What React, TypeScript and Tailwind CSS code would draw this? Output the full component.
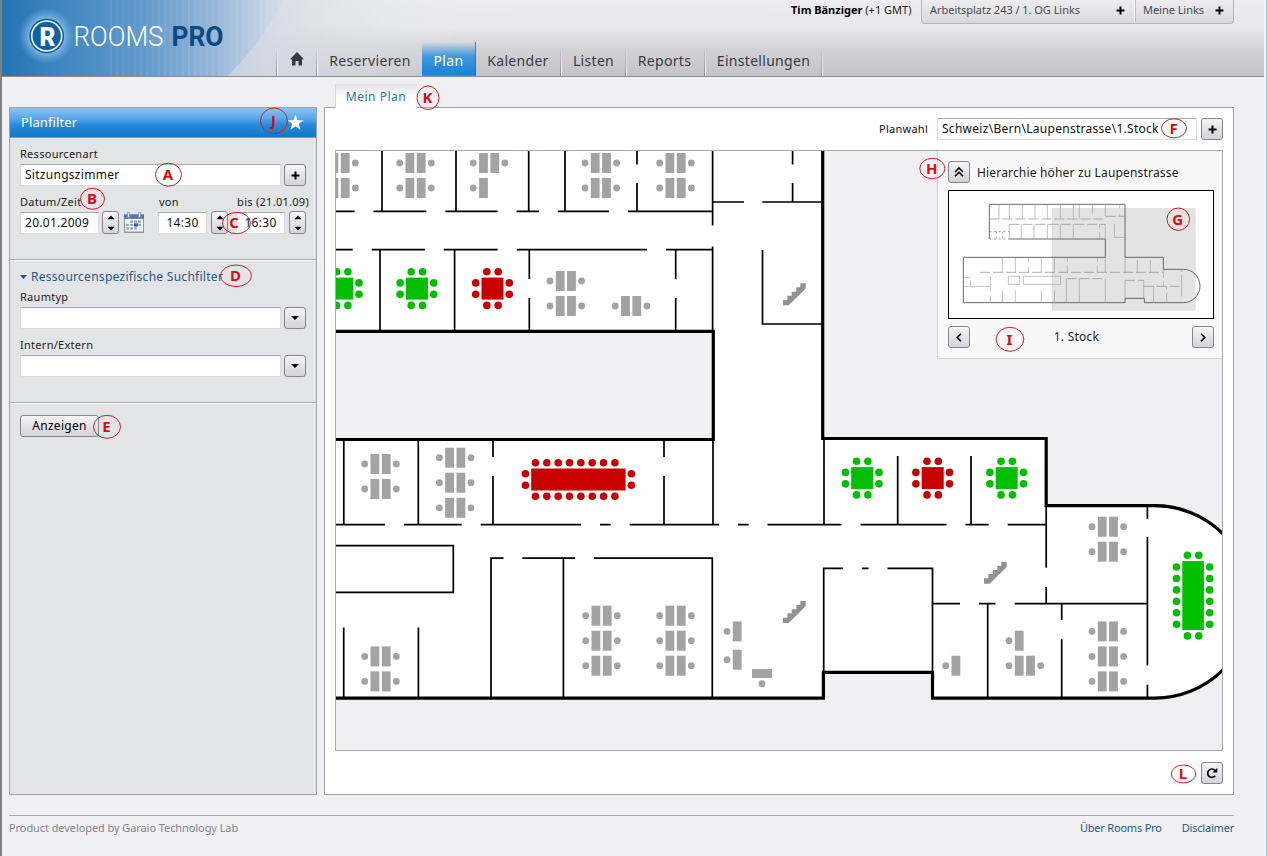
import React from 'react';

const BTN =
  'flex shrink-0 items-center justify-center rounded-[3px] border border-[#85858c] bg-gradient-to-b from-[#f6f6f8] to-[#d3d3d8] text-black';
const INPUT =
  'flex h-[22px] shrink-0 items-center border border-[#dcdce0] border-t-[#a9a9b0] bg-white px-1 text-[12px] tracking-[0.28px] text-[#111] whitespace-nowrap';

function Plus() {
  return (
    <svg width="9" height="9" viewBox="0 0 9 9">
      <path d="M4.5 .5v8M.5 4.5h8" stroke="#000" strokeWidth="2" />
    </svg>
  );
}

function Down() {
  return (
    <svg width="8" height="4" viewBox="0 0 8 4">
      <path d="M0 0h8L4 4z" fill="#000" />
    </svg>
  );
}

function Spinner() {
  return (
    <div className={`${BTN} h-[23px] w-[17px]`}>
      <svg width="8" height="16" viewBox="0 0 8 16">
        <path d="M.5 4.2h7L4 .4zM.5 11.8h7L4 15.600z" fill="#000" />
      </svg>
    </div>
  );
}

function Calendar() {
  return (
    <svg width="22" height="22" viewBox="0 0 22 22">
      <path d="M1 2.5h20v18.500H1z" fill="#8f959e" />
      <path d="M2 7h18v12.5H2z" fill="#f3f6fa" />
      <path d="M1 2.500h20v4H1z" fill="#4a78b5" />
      <path d="M4.500 .5h2v5h-2zM15.500 .5h2v5h-2z" fill="#dfe3e8" stroke="#77808c" strokeWidth=".6" />
      <path
        d="M7 8.500h3v2.300H7zM11 8.500h3v2.300H11zM15 8.500h3v2.300H15zM3 11.800h3v2.300H3zM7 11.800h3v2.300H7zM15 11.800h3v2.300H15zM3 15.300h3v2.300H3zM7 15.300h3v2.300H7zM11 15.300h3v2.300H11z"
        fill="#9aa6b6"
      />
      <path d="M11 11.300h3.800v3.300H11z" fill="#2f5fa8" />
    </svg>
  );
}

function Brand() {
  return (
    <svg width="460" height="76" viewBox="2 0 460 76" className="block shrink-0">
      <defs>
        <linearGradient id="blue" x1="0" x2="1">
          <stop offset="0" stopColor="#2474b2" />
          <stop offset=".2" stopColor="#3f86c0" />
          <stop offset=".5" stopColor="#6199ca" />
          <stop offset=".75" stopColor="#96b6d8" />
          <stop offset="1" stopColor="#d6deea" />
        </linearGradient>
        <linearGradient id="mist" x1="0" x2="1">
          <stop offset="0" stopColor="#b9cadf" />
          <stop offset=".25" stopColor="#d3dae5" stopOpacity=".9" />
          <stop offset="1" stopColor="#e9eaed" stopOpacity="0" />
        </linearGradient>
        <radialGradient id="glow">
          <stop offset=".5" stopColor="#a8dbff" stopOpacity=".75" />
          <stop offset="1" stopColor="#8ec8f5" stopOpacity="0" />
        </radialGradient>
        <pattern id="rays" width="6" height="76" patternUnits="userSpaceOnUse">
          <path d="M3 0v76" stroke="#fff" strokeWidth="2" opacity=".06" />
        </pattern>
      </defs>
      <path d="M200 0h262v76H200z" fill="url(#mist)" />
      <path d="M2 0h281Q264 40 228 76H2z" fill="url(#blue)" />
      <path d="M110 0h173Q264 40 228 76H110z" fill="url(#rays)" />
      <circle cx="46.500" cy="36" r="28" fill="url(#glow)" />
      <circle cx="46.700" cy="36" r="17.300" fill="#0b5695" />
      <circle cx="46.700" cy="36" r="15" fill="#0f62a8" stroke="#fff" strokeWidth="1.600" />
      <text x="39.500" y="45.500" fontFamily="Roboto, sans-serif" fontWeight="900" fontSize="26" fill="#fff" textLength="16" lengthAdjust="spacingAndGlyphs">R</text>
      <text x="73.500" y="45.500" fontFamily="Roboto, sans-serif" fontWeight="300" fontSize="27" fill="#fff" textLength="90" lengthAdjust="spacingAndGlyphs">ROOMS</text>
      <text x="171.500" y="45.500" fontFamily="Roboto, sans-serif" fontWeight="700" fontSize="27" fill="#0a4a86" textLength="52" lengthAdjust="spacingAndGlyphs">PRO</text>
    </svg>
  );
}

function Sep() {
  return (
    <div className="flex h-[27px] w-[2px] shrink-0">
      <div className="w-px bg-gradient-to-b from-transparent to-[#8e8e94]" />
      <div className="w-px bg-gradient-to-b from-transparent to-white" />
    </div>
  );
}

function NavItem({ label, width }: { label: string; width: string }) {
  return (
    <>
      <div className={`${width} shrink-0 pb-[4px] text-center text-[14px] leading-[22px] tracking-[0.3px] whitespace-nowrap text-[#3b3b3f]`}>
        {label}
      </div>
      <Sep />
    </>
  );
}

function Header() {
  return (
    <header className="relative flex h-[77px] w-[1262px] border-b border-[#8b8b91] bg-[linear-gradient(#ededef_0,#e9e9eb_35%,#d2d2d6_65%,#c3c3c8_100%)]">
      <Brand />
      <nav className="absolute bottom-0 left-[274px] flex items-end">
        <Sep />
        <div className="flex h-[27px] w-[38px] justify-center pt-[3px]">
          <svg width="14" height="14" viewBox="0 0 14 14">
            <path d="M7 0 14 7.200H12V13.500H8.500V9H5.500V13.500H2V7.200H0z" fill="#3a3a3e" />
          </svg>
        </div>
        <Sep />
        <div className="w-[104px] pb-[4px] text-center text-[14px] leading-[22px] tracking-[0.35px] text-[#3b3b3f]">Reservieren</div>
        <div className="flex h-[34px] w-[54px] items-end justify-center border-r border-b border-[#1a6bb0]/70 bg-[linear-gradient(transparent,#3f97dc_45%,#1784dc)] pb-[3px] text-[14px] leading-[22px] tracking-[0.3px] text-white">
          Plan
        </div>
        <NavItem label="Kalender" width="w-[84px]" />
        <NavItem label="Listen" width="w-[63px]" />
        <NavItem label="Reports" width="w-[77px] pr-[2px]" />
        <NavItem label="Einstellungen" width="w-[115px]" />
      </nav>
      <div className="ml-auto flex h-[24px] pr-[30px] text-[11px]">
        <div className="w-[130px] pt-px leading-[17px] whitespace-nowrap text-[#222]">
          <b className="text-black">Tim Bänziger</b> (+1 GMT)
        </div>
        <div className="flex h-[24px] w-[313px] rounded-b-[4px] border border-t-0 border-[#b4b4ba] bg-gradient-to-b from-[#ededef] to-[#d9d9dd] leading-[17px] tracking-[-0.04px] text-[#4a4a4e]">
          <div className="flex w-[213px] items-start justify-between border-r border-white pt-px pr-[9px] pl-2 whitespace-nowrap">
            <span>Arbeitsplatz 243 / 1. OG Links</span>
            <span className="pt-[5px]"><Plus /></span>
          </div>
          <div className="flex flex-1 items-start justify-between border-l border-[#bbbbc0] pt-px pr-[9px] pl-[7px] whitespace-nowrap">
            <span>Meine Links</span>
            <span className="pt-[5px]"><Plus /></span>
          </div>
        </div>
      </div>
    </header>
  );
}

function Sidebar() {
  return (
    <aside className="h-[688px] w-[308px] shrink-0 border border-[#a2a2a9] bg-[#e3e4e6] text-[11px] tracking-[0.28px] text-[#1d1d20]">
      <div className="flex h-[30px] items-center justify-between border-b border-[#8c9cb0] bg-[linear-gradient(#8cc4f4_0,#59a8ea_35%,#2389dd_60%,#1577c4_100%)] pr-3 pl-[11px] text-[13px] tracking-[0.1px] text-white">
        <span>Planfilter</span>
        <svg width="17" height="17" viewBox="0 0 18 17">
          <path d="M9 0l2.200 6h6.300l-5 3.900 1.900 6.300L9 12.400l-5.400 3.800 1.900-6.300-5-3.900h6.300z" fill="#fff" />
        </svg>
      </div>
      <div className="h-[122px] border-b border-[#a9a9b0] px-[10px] pt-[8px]">
        <div className="h-[18px] leading-[16px]">Ressourcenart</div>
        <div className="flex justify-between">
          <div className={`${INPUT} w-[261px]`}>Sitzungszimmer</div>
          <div className={`${BTN} h-[22px] w-[22px]`}><Plus /></div>
        </div>
        <div className="flex h-[25px] pt-[8px] leading-[16px] whitespace-nowrap">
          <span className="w-[139px]">Datum/Zeit</span>
          <span>von</span>
          <span className="mr-[-3px] ml-auto">bis (21.01.09)</span>
        </div>
        <div className="flex items-center">
          <div className={`${INPUT} w-[79px]`}>20.01.2009</div>
          <div className="ml-[3px]"><Spinner /></div>
          <div className="ml-[4px]"><Calendar /></div>
          <div className={`${INPUT} ml-[13px] w-[49px] justify-center`}>14:30</div>
          <div className="ml-[4px]"><Spinner /></div>
          <div className={`${INPUT} ml-[8px] w-[49px] justify-center`}>16:30</div>
          <div className="ml-[4px]"><Spinner /></div>
        </div>
      </div>
      <div className="h-[143px] border-t border-b border-t-white border-b-[#a9a9b0] px-[10px] pt-[6px]">
        <div className="flex h-[20px] items-center gap-[4px] text-[12px] whitespace-nowrap text-[#1d5a90]">
          <svg width="7" height="4" viewBox="0 0 7 4"><path d="M0 0h7L3.500 4z" fill="#0f5a98" /></svg>
          Ressourcenspezifische Suchfilter
        </div>
        <div className="h-[20px] pt-[2px] leading-[16px]">Raumtyp</div>
        <div className="flex justify-between">
          <div className={`${INPUT} w-[261px]`} />
          <div className={`${BTN} h-[22px] w-[22px]`}><Down /></div>
        </div>
        <div className="h-[26px] pt-[8px] leading-[16px]">Intern/Extern</div>
        <div className="flex justify-between">
          <div className={`${INPUT} w-[261px]`} />
          <div className={`${BTN} h-[22px] w-[22px]`}><Down /></div>
        </div>
      </div>
      <div className="border-t border-white px-[10px] pt-[11px]">
        <div className={`${BTN} h-[22px] w-[79px] text-[12px]`}>Anzeigen</div>
      </div>
    </aside>
  );
}

type Pt = [number, number];

function Desk({ x, y, half = false }: { x: number; y: number; half?: boolean }) {
  return (
    <g fill="#a3a3a3">
      <circle cx={x - 15.8} cy={y} r="3.400" />
      <rect x={x - 10} y={y - 10} width="8.800" height="20" />
      {!half && <rect x={x + 1.3} y={y - 10} width="8.800" height="20" />}
      {!half && <circle cx={x + 15.8} cy={y} r="3.400" />}
    </g>
  );
}

type TableProps = { x: number; y: number; w?: number; h?: number; nx?: number; ny?: number; shift?: number; color: string };

function Table({ x, y, w = 22, h = 22, nx = 2, ny = 2, shift = 0, color }: TableProps) {
  const chairs: Pt[] = [];
  for (let i = 0; i < nx; i++) {
    const dx = (i - (nx - 1) / 2) * 11.35 + shift;
    chairs.push([x + dx, y - h / 2 - 5.8], [x + dx, y + h / 2 + 5.8]);
  }
  for (let i = 0; i < ny; i++) {
    const dy = (i - (ny - 1) / 2) * 11.45;
    chairs.push([x - w / 2 - 5.8, y + dy], [x + w / 2 + 5.8, y + dy]);
  }
  return (
    <g fill={color}>
      <rect x={x - w / 2} y={y - h / 2} width={w} height={h} />
      {chairs.map(([cx, cy], i) => (
        <circle key={i} cx={cx} cy={cy} r="3.800" />
      ))}
    </g>
  );
}

const GREEN = '#00bf00';
const RED = '#c80000';

const DESKS: Pt[] = [
  [339.5, 163], [339.5, 188], [415.5, 163], [415.5, 188], [489.1, 163], [600.8, 163], [600.8, 188],
  [675.5, 163], [675.5, 188], [565.8, 281], [565.8, 306], [631.1, 306], [380.5, 464], [380.5, 489],
  [455.2, 457.7], [455.2, 482.7], [455.2, 507.8], [380.5, 656.4], [380.5, 681.4],
  [601.5, 615.7], [601.5, 640.7], [601.5, 665.7], [675.5, 615.7], [675.5, 640.7], [675.5, 665.7],
  [1024.8, 665.7], [1107.8, 526.7], [1107.8, 551.7], [1107.8, 631.4], [1107.8, 656.4], [1107.8, 681.4],
];
const HALF_DESKS: Pt[] = [[489.1, 188], [742.8, 631.4], [742.8, 659.7], [961.5, 665.7], [1024.8, 640.7]];
const STAIRS: Pt[] = [[783, 305.3], [783, 623], [984, 583.7]];

const WALLS = [
  'M382 151V211M456 151V211M528.700 151V211M565 151V211',
  'M336 211.300H354.700M373.500 211.300H426.300M445.300 211.300H497.700M516.500 211.300H539M558 211.300H609M628 211.300H712.600',
  'M336 249.600H352.700M371.700 249.600H425M443.700 249.600H497.700M516.700 249.600H647M666 249.600H712.600',
  'M380 250V330M454.600 250V330M529.300 250V279M529.300 298V330',
  'M637 151V164.500M637 183V211M712.600 151V225.600M712.600 246.500V330M792.600 151V164.500M792.600 183V202',
  'M712.600 202H744M762.300 202H822M675.700 250V279M675.700 298V330M762.500 250V324H822',
  'M343.800 440V524M418.300 440V524M493 440V457M493 476V524M664 440V457M664 476V524M713 440V524',
  'M336 524.600H385M404 524.600H461.700M480.700 524.600H581M600 524.600H610.700M629.700 524.600H719M738 524.600H748.700M767.500 524.600H841.500M860.500 524.600H946.500M965.500 524.600H988.700M1007.700 524.600H1046',
  'M336 545.700H453.300V592.300H336',
  'M503.500 558.200H491V698M522.300 558.200H575.200M594 558.200H712.300V698M563.400 558V698',
  'M343.700 627.500V698M418.400 627.500V698M824 440V524M897.700 456V524M971 456V524',
  'M843 568.400H823.700V672M862 568.400H868.500M887.500 568.400H932.500V672',
  'M932.500 603.700H960M979 603.700H995.500M1014.700 603.700H1147.300M987.700 604V698',
  'M1061.700 604V620M1061.700 639V698M1046.200 506V567.700M1046.200 587V604M1147.400 506V518.700M1147.400 537V665.600M1147.400 684.700V698',
].join('');

function FloorPlan() {
  return (
    <svg width="886" height="599" viewBox="336 151 886 599" className="block bg-[#f0f0f2]">
      <path
        d="M330 145H822.700V438.500H1046.200V505.700H1155A96.200 96.200 0 0 1 1155 698.100H932.500V672.300H823.400V698.100H330V439.500H713.300V331.300H330Z"
        fill="#fff"
        stroke="#000"
        strokeWidth="3.200"
      />
      <path d={WALLS} fill="none" stroke="#000" strokeWidth="1.700" />
      {DESKS.map(([x, y], i) => <Desk key={i} x={x} y={y} />)}
      {HALF_DESKS.map(([x, y], i) => <Desk key={i} x={x} y={y} half />)}
      <rect x="752" y="669" width="20" height="9" fill="#a3a3a3" />
      <circle cx="762" cy="683.700" r="3.400" fill="#a3a3a3" />
      {STAIRS.map(([x, y], i) => (
        <path key={i} transform={`translate(${x} ${y}) scale(.3333)`} d="M0 0V-16H13V-29H26V-41H40V-54H52V-66H68V-50L17 0Z" fill="#929292" />
      ))}
      <Table x={342.2} y={288.6} color={GREEN} />
      <Table x={416.9} y={288.6} color={GREEN} />
      <Table x={492.5} y={288.6} color={RED} />
      <Table x={862.2} y={478.1} color={GREEN} />
      <Table x={932.7} y={478.1} color={RED} />
      <Table x={1006.7} y={478.1} color={GREEN} />
      <Table x={578.4} y={479.5} w={94.4} nx={8} shift={-3.2} color={RED} />
      <Table x={1193.1} y={595.6} w={21.6} h={69} ny={6} color={GREEN} />
    </svg>
  );
}

function MiniMap() {
  return (
    <svg width="266" height="129" viewBox="69 135 798 387" className="block">
      <rect x="70.500" y="136.500" width="795" height="384" fill="#fff" stroke="#000" strokeWidth="3" />
      <rect x="381" y="189" width="431" height="308" fill="#e3e3e3" />
      <path
        d="M193 282V178H600V337H715V373H775A50 50 0 0 1 775 473H658V460H600V473H115V337H541V282H253"
        fill="none"
        stroke="#555"
        strokeWidth="2.600"
      />
      <path
        d="M222 180V222M253 180V220M292 180V220M330 180V220M367 180V220M406 180V220M445 180V220M463 180V220M502 180V206M541 180V214M584 180V190M584 206V214M568 237V277H600M289 238V282M327 238V282M367 238V282M406 238V282M445 238V282M524 238V250M524 262V282M541 238V282M253 238V282M232 339V382M271 339V382M310 339V350M310 366V382M349 339V382M388 339V382M427 339V350M427 362V382M517 339V350M517 362V382M541 339V382M600 339V382M637 345V382M676 345V382M715 373V398M715 410V424M770 373V380M770 390V454M196 394V440M196 452V473M232 436V473M271 436V473M349 436V473M388 436V473M115 424H196M115 398H137M137 406V424M250 394H284V418H250ZM295 394H407V418H295ZM424 473V401M463 401V473M541 401V473M600 460V406M656 406V460M686 424V473M725 424V434M725 444V473"
        fill="none"
        stroke="#999"
        strokeWidth="1.800"
      />
      <path d="M193 222H541M253 238H541M541 214H600M165 382H715M424 401H541M600 406H656M656 424H770" fill="none" stroke="#8a8a8a" strokeWidth="2" strokeDasharray="30 9" />
      <path d="M193 260H253M193 282H253M214 260V282M232 260V282" fill="none" stroke="#666" strokeWidth="2" strokeDasharray="6 8" />
    </svg>
  );
}

function Navigator() {
  return (
    <div className="absolute top-0 right-0 h-[208px] w-[285px] border-b border-l border-[#d3d3d7] bg-[#f8f8f9] pt-[10px] pr-[8px] pl-[10px] text-[12px] tracking-[0.17px] text-[#1a1a1c]">
      <div className="flex h-[29px] items-start gap-[7px]">
        <div className={`${BTN} h-[22px] w-[22px]`}>
          <svg width="10" height="10" viewBox="0 0 10 10"><path d="M1 5 5 1l4 4M1 9.300l4-4 4 4" fill="none" stroke="#000" strokeWidth="1.600" /></svg>
        </div>
        <span className="leading-[23px] whitespace-nowrap">Hierarchie höher zu Laupenstrasse</span>
      </div>
      <MiniMap />
      <div className="mt-[7px] flex items-center justify-between">
        <div className={`${BTN} h-[22px] w-[22px]`}>
          <svg width="6" height="9" viewBox="0 0 6 9"><path d="M5 .7 1.200 4.500 5 8.300" fill="none" stroke="#000" strokeWidth="1.600" /></svg>
        </div>
        <span className="pr-[9px] tracking-[0.25px]">1. Stock</span>
        <div className={`${BTN} h-[22px] w-[22px]`}>
          <svg width="6" height="9" viewBox="0 0 6 9"><path d="M1 .7 4.800 4.500 1 8.300" fill="none" stroke="#000" strokeWidth="1.600" /></svg>
        </div>
      </div>
    </div>
  );
}

function PlanArea() {
  return (
    <main className="w-[910px] shrink-0">
      <div className="relative z-10 -mb-px ml-[11px] flex h-[24px] w-[82px] items-center justify-center border-l border-[#d9d9dd] bg-gradient-to-b from-[#e2e2e5] to-white to-60% pt-[2px] pr-[1px] text-[12px] tracking-[0.5px] text-[#2277bd]">
        Mein Plan
      </div>
      <div className="h-[688px] border border-[#a2a2a9] bg-white pr-[10px] pl-[10px]">
        <div className="flex h-[42px] items-center justify-end text-[12px] text-[#111]">
          <span className="mr-[9px] text-[11px] tracking-[0.25px]">Planwahl</span>
          <div className={`${INPUT} mr-[4px] w-[260px]`}>Schweiz\Bern\Laupenstrasse\1.Stock</div>
          <div className={`${BTN} h-[22px] w-[22px]`}><Plus /></div>
        </div>
        <div className="relative h-[601px] w-[888px] border border-[#a8a8ae]">
          <FloorPlan />
          <Navigator />
        </div>
        <div className="flex h-[43px] items-center justify-end">
          <div className={`${BTN} h-[22px] w-[22px]`}>
            <svg width="12" height="12" viewBox="0 0 12 12">
              <path d="M9.200 8.800A4.200 4.200 0 1 1 9 3.400" fill="none" stroke="#000" strokeWidth="1.700" />
              <path d="M11.300 .8V5.600H6.500z" fill="#000" />
            </svg>
          </div>
        </div>
      </div>
    </main>
  );
}

const MARKS: [string, number, number, number, number][] = [
  ['A', 168.5, 174.7, 13, 11.5], ['B', 92.5, 198.8, 12, 10.5], ['C', 236.5, 223, 14, 10.7],
  ['D', 236, 275.8, 15.5, 10.8], ['E', 107, 426.8, 13.5, 11.5], ['F', 1174, 128.3, 12.5, 9.5],
  ['G', 1178.3, 219.2, 11.3, 11.2], ['H', 932.3, 168.5, 12.5, 10.2], ['I', 1010, 339.3, 13.8, 12],
  ['J', 274, 120.8, 13.5, 12.8], ['K', 428, 97.8, 11, 11.8], ['L', 1183.5, 774, 12.2, 9],
];

function Marks() {
  return (
    <svg width="1267" height="856" viewBox="0 0 1267 856" className="pointer-events-none absolute top-0 left-0 z-20">
      {MARKS.map(([letter, x, y, rx, ry]) => (
        <g key={letter}>
          <ellipse cx={x} cy={y} rx={rx} ry={ry} fill="none" stroke="#d81c24" strokeWidth="1" />
          <text x={letter === 'C' ? x - 2.5 : x - 0.5} y={y + 5.4} textAnchor="middle" fontFamily="'Noto Sans', sans-serif" fontWeight="700" fontSize="15" fill="#dd0a12">
            {letter}
          </text>
        </g>
      ))}
    </svg>
  );
}

export default function App() {
  return (
    <div className="relative flex h-[856px] w-[1267px] overflow-hidden bg-[#f0f0f2] font-['Noto_Sans','Open_Sans',sans-serif]">
      <div className="w-[2px] shrink-0 bg-[#7f7f84]" />
      <div className="flex w-[1262px] shrink-0 flex-col">
        <Header />
        <div className="flex items-end gap-[7px] pt-[7px] pl-[7px]">
          <Sidebar />
          <PlanArea />
        </div>
        <footer className="mt-[20px] ml-[7px] flex w-[1225px] justify-between border-t border-[#a9a9b0] pt-[3px] text-[11px] leading-[17px] tracking-[-0.08px]">
          <span className="text-[#85858a]">Product developed by Garaio Technology Lab</span>
          <span className="flex gap-[20px] tracking-[-0.2px] text-[#1d5a90]">
            <span>Über Rooms Pro</span>
            <span>Disclaimer</span>
          </span>
        </footer>
      </div>
      <div className="w-[2px] shrink-0 bg-[#f8f9fb]" />
      <div className="w-px shrink-0 bg-[#a9c0dc]" />
      <Marks />
    </div>
  );
}
